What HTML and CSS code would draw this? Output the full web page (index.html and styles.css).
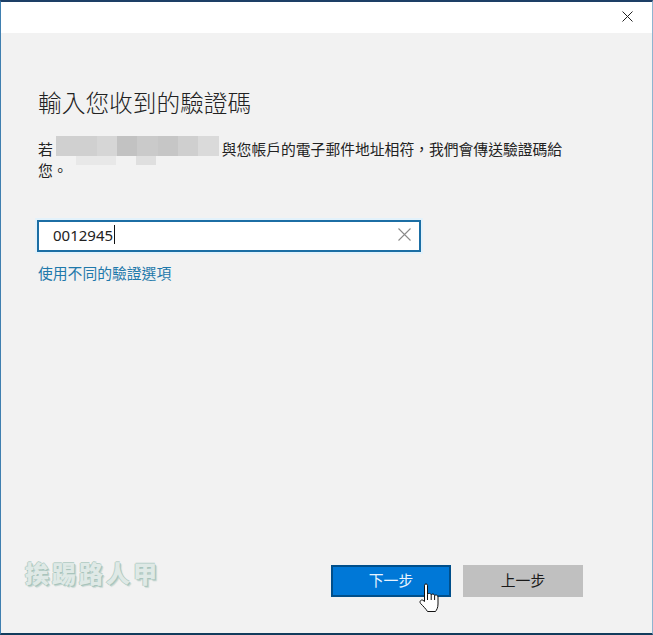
FILE: index.html
```html
<!DOCTYPE html>
<html lang="zh-Hant">
<head>
<meta charset="utf-8">
<title>輸入您收到的驗證碼</title>
<link rel="stylesheet" href="styles.css">
</head>
<body>
<div class="window">
  <header class="titlebar">
    <button class="close" aria-label="關閉">
      <svg width="11" height="11" viewBox="0 0 11 11"><path d="M0.5 0.5L10.5 10.5M10.5 0.5L0.5 10.5" stroke="#222" stroke-width="1" fill="none"/></svg>
    </button>
  </header>
  <main class="content">
    <h1 class="heading">輸入您收到的驗證碼</h1>
    <p class="message">若<span class="redact"><i class="c1"></i><i class="c2"></i><i class="c3"></i><i class="c4"></i><i class="c5"></i><i class="c6"></i><i class="c7"></i><i class="c8"></i><b class="low1"></b><b class="low2"></b></span>與您帳戶的電子郵件地址相符，我們會傳送驗證碼給您。</p>
    <div class="field">
      <span class="value">0012945</span><span class="caret"></span>
      <svg class="clear" width="13" height="13" viewBox="0 0 13 13"><path d="M0.5 0.5L12.5 12.5M12.5 0.5L0.5 12.5" stroke="#8a8a8a" stroke-width="1.1" fill="none"/></svg>
    </div>
    <a class="link" href="#">使用不同的驗證選項</a>
    <footer class="footer">
      <span class="watermark">挨踢路人甲</span>
      <div class="actions">
        <button class="btn primary">下一步</button>
        <button class="btn secondary">上一步</button>
      </div>
      <svg class="hand" width="24" height="32" viewBox="0 0 24 32">
        <path d="M6.5 3.2C6.5 1.5 9.5 1.5 9.5 3.2V12.5C10 11 13 11 13.2 12.8C13.8 11.5 16.4 11.7 16.6 13.6C17.4 12.6 20 12.9 20 15V22C20 26 18.5 28 17.5 29.5H9.5C8 27 5.5 24.5 2.6 21.5C1 19.5 3 17.2 5 18.3L6.5 19.5Z" fill="#fff" stroke="#111" stroke-width="1" stroke-linejoin="round"/>
        <path d="M9.5 12.5V18M13.2 12.8V18M16.6 13.6V18" stroke="#111" stroke-width="1" fill="none"/>
      </svg>
    </footer>
  </main>
</div>
</body>
</html>
```
FILE: styles.css
```css
* { box-sizing: border-box; }
html, body { margin: 0; height: 100%; }
body { font-family: "Noto Sans CJK TC", "Noto Sans", sans-serif; color: #1a1a1a; }
.window {
  width: 653px;
  height: 635px;
  display: flex;
  flex-direction: column;
  border-top: 2px solid #1d3f66;
  border-left: 1px solid #3f7fb0;
  border-right: 1px solid #8fb4d0;
  border-bottom: 2px solid #123c5c;
  background: #f2f2f2;
}
.titlebar {
  height: 31px;
  flex: none;
  background: #fff;
  display: flex;
  justify-content: flex-end;
  align-items: center;
  padding: 0 19px 2px 0;
}
.close { border: 0; padding: 0; background: none; display: flex; }
.content {
  flex: 1;
  display: flex;
  flex-direction: column;
  padding: 0 37px;
  position: relative;
}
.heading {
  margin: 51px 0 0;
  font-size: 23.7px;
  line-height: 36px;
  font-weight: 300;
  color: #222;
}
.message {
  margin: 18px 0 0;
  width: 530px;
  font-size: 14.8px;
  line-height: 21px;
  font-weight: 400;
  color: #222;
}
.redact {
  display: inline-flex;
  position: relative;
  top: -2px;
  width: 163px;
  height: 20px;
  margin: 0 3px;
  vertical-align: top;
}
.redact i { flex: 1; }
.redact .c1, .redact .c2 { background: #d0d0d0; }
.redact .c3 { background: #d6d6d6; }
.redact .c4 { background: #c2c2c2; }
.redact .c5 { background: #cacaca; }
.redact .c6 { background: #c6c6c6; }
.redact .c7 { background: #cfcfcf; }
.redact .c8 { background: #dadada; }
.redact b { position: absolute; top: 20px; height: 9px; background: #e8e8e8; }
.redact .low1 { left: 20px; width: 40px; }
.redact .low2 { left: 80px; width: 20px; background: #dfdfdf; }
.field {
  margin: 40px 0 0 -1px;
  width: 384px;
  height: 32px;
  border: 2px solid #1c6ea4;
  box-shadow: 0 0 0 2px #e3f2fb;
  background: #fff;
  display: flex;
  align-items: center;
  padding: 0 8px 3px 14px;
  font-family: "Noto Sans", sans-serif;
  font-size: 15px;
  color: #222;
}
.caret { width: 1px; height: 19px; background: #111; margin-left: 1px; }
.clear { margin-left: auto; }
.link {
  margin-top: 10px;
  font-size: 14.8px;
  line-height: 22px;
  color: #1f79ab;
  text-decoration: none;
  align-self: flex-start;
}
.footer { margin-top: auto; position: relative; height: 68px; flex: none; }
.watermark {
  position: absolute;
  left: -13px;
  top: -8px;
  font-size: 24px;
  line-height: 32px;
  font-weight: 900;
  letter-spacing: 3px;
  color: #dfe9e6;
  text-shadow: 1px 1px 0 #a9c4bc, -1px 0 0 #b9d0c9, 0 -1px 0 #b9d0c9, 2px 2px 1px #c5d6d1;
}
.actions { position: absolute; left: 293px; top: 0; display: flex; gap: 12px; }
.btn {
  width: 120px;
  height: 32px;
  font-family: inherit;
  font-size: 14.8px;
  padding: 0 0 3px;
  border: 2px solid transparent;
}
.primary { background: #0078d7; border-color: #004f8b; color: #e8f4ff; }
.secondary { background: #c0c0c0; border-color: #c0c0c0; color: #1a1a1a; }
.hand { position: absolute; left: 380px; top: 17px; }
```
